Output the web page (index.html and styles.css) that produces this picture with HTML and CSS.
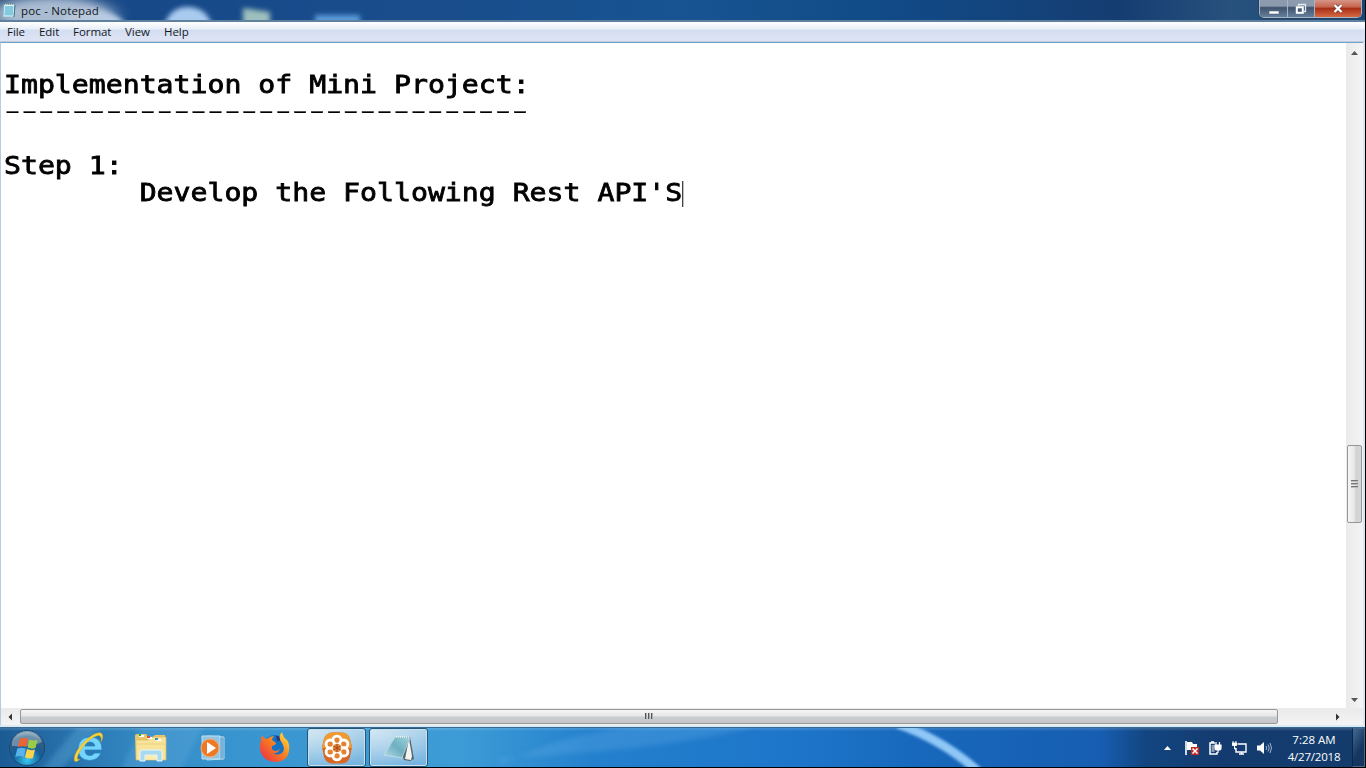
FILE: index.html
```html
<!DOCTYPE html>
<html lang="en">
<head>
<meta charset="utf-8">
<title>poc - Notepad</title>
<link rel="stylesheet" href="styles.css">
</head>
<body>
<div class="screen">
<main class="window">
  <header class="titlebar">
    <svg class="backdrop" width="1366" height="22" viewBox="0 0 1366 22">
      <defs><filter id="soft" x="-30%" y="-60%" width="160%" height="220%"><feGaussianBlur stdDeviation="2.600"/></filter>
      <filter id="haze" x="-20%" y="-80%" width="140%" height="260%"><feGaussianBlur stdDeviation="10 4"/></filter></defs>
      <path d="M60 24Q68 9 90 9Q116 11 126 24Z" fill="#b9d1ee" filter="url(#soft)"/>
      <ellipse cx="52" cy="14" rx="60" ry="17" fill="#b9c8db" opacity=".9" filter="url(#haze)"/>
      <path d="M164 26Q170 7 187 7Q207 7 212 26Z" fill="#a8caef" filter="url(#soft)"/>
      <path d="M243 8L270 12V26H243Z" fill="#9dbfbd" filter="url(#soft)"/>
      <path d="M315 15H360V26H315Z" fill="#5b9bda" filter="url(#soft)"/>
    </svg>
    <svg class="app-icon" width="14" height="16" viewBox="0 0 14 16"><path d="M2 2h11l-1 13H1z" fill="#e1f3f7" stroke="#86afbd" stroke-width=".8"/><path d="M3 4h8.500l-.7 9.500H2.300z" fill="#81cadf"/><path d="M2 2h11" stroke="#526f7b" stroke-dasharray="1 1"/><path d="M13 3l-1 12" stroke="#417585"/></svg>
    <span class="title">poc - Notepad</span>
    <div class="controls">
      <span class="ctl min"><svg width="14" height="12" viewBox="0 0 14 12"><path d="M2 8h10v3H2z" fill="#fff" stroke="#51647c" stroke-width=".6"/></svg></span>
      <span class="ctl max"><svg width="14" height="14" viewBox="0 0 14 14"><path d="M4.500 4V2.500h7v7H10" fill="none" stroke="#dfe7f1" stroke-width="1.300"/><rect x="2.800" y="5.300" width="6" height="5.500" fill="#425b7b" stroke="#fff" stroke-width="2"/></svg></span>
      <span class="ctl close"><svg width="14" height="12" viewBox="0 0 14 12"><path d="M3.500 2l7 7M10.500 2l-7 7" stroke="#743e37" stroke-width="3.600"/><path d="M3.500 2l7 7M10.500 2l-7 7" stroke="#fff" stroke-width="2.300"/></svg></span>
    </div>
  </header>
  <nav class="menu"><span class="m-file">File</span><span class="m-edit">Edit</span><span class="m-format">Format</span><span class="m-view">View</span><span class="m-help">Help</span></nav>
  <div class="client">
    <section class="editor">
      <div class="line">Implementation of Mini Project:</div>
      <div class="line dashes">-------------------------------</div>
      <div class="line"> </div>
      <div class="line">Step 1:</div>
      <div class="line">        Develop the Following Rest API'S<i class="caret"></i></div>
    </section>
    <aside class="vscroll">
      <svg width="9" height="6" viewBox="0 0 9 6"><path d="M1 5h7L4.500 1z" fill="#555"/></svg>
      <div class="vthumb"><i></i><i></i><i></i></div>
      <svg width="9" height="6" viewBox="0 0 9 6"><path d="M1 1h7L4.500 5z" fill="#555"/></svg>
    </aside>
  </div>
  <div class="hscroll">
    <svg class="left-arrow" width="6" height="8" viewBox="0 0 6 8"><path d="M5 .5v7L1.500 4z" fill="#333"/></svg>
    <div class="hthumb"><i></i><i></i><i></i></div>
    <svg class="right-arrow" width="6" height="8" viewBox="0 0 6 8"><path d="M1 .5v7L4.500 4z" fill="#333"/></svg>
  </div>
</main>
<footer class="taskbar">
  <svg class="backdrop" width="1366" height="39" viewBox="0 0 1366 39">
    <g filter="url(#soft)"><path d="M40 44L80-4H104L58 44Z" fill="#6ab5e2" opacity=".3"/><path d="M120 44L142-4H205L180 44Z" fill="#7abce8" opacity=".22"/><path d="M500 38Q560 4 650-3L760-3Q670 22 500 30Z" fill="#71b3ec" opacity=".25"/></g>
    <path d="M799-4Q844 12 880 44" transform="translate(99)" fill="none" stroke="#8fc7f6" stroke-width="9" filter="url(#edge)"/>
    <defs><filter id="edge"><feGaussianBlur stdDeviation="1.500"/></filter></defs>
  </svg>
  <div class="start">
    <svg width="38" height="38" viewBox="0 0 38 38">
      <defs><radialGradient id="orb" cx=".5" cy=".85" r=".9"><stop offset="0" stop-color="#36c7ef"/><stop offset=".45" stop-color="#155d98"/><stop offset=".75" stop-color="#375d7d"/><stop offset="1" stop-color="#b7cedb"/></radialGradient></defs>
      <circle cx="19" cy="19" r="17.500" fill="url(#orb)" stroke="#164a76"/>
      <path d="M4 13Q8 3 19 3T34 13Q25 18 4 17Z" fill="#d6e9f3" opacity=".36"/>
      <path d="M12 10q4.500-2 8 0L18.200 18q-4-1.500-8.500 0z" fill="#ed6432"/><path d="M21 10.500q4 2 8.500.3L27.500 19q-4 1.500-8-.5z" fill="#9ccb46"/><path d="M9.300 19.500q4.200-1.500 8.300 0L15.800 28q-4-2-8.500 0z" fill="#59b2eb"/><path d="M19 20q4 2 8 .5L25 29q-4 1.500-8-.7z" fill="#fad34c"/>
    </svg>
  </div>
  <div class="task">
    <svg width="34" height="34" viewBox="0 0 34 34"><path d="M29 22Q26 29.500 17 29.500Q6 28.500 6 17.500Q7 6 18 6Q30 6 30 19H13Q13 24.500 18 24.500Q21 24.500 22.500 22ZM13 15H23Q22 11 18 11Q14 11 13 15Z" fill="#75d4fa" stroke="#2585c9" stroke-width=".8" fill-rule="evenodd"/><path d="M8 28C1 35 0 26 7 17C15 6 27-1 30 3Q32 6 29 11Q30 5 27 4.500C22 4 12 13 8 20C4 27 5 30 8 28Z" fill="#f6d33f" stroke="#d8a71c" stroke-width=".5"/></svg>
  </div>
  <div class="task">
    <svg width="34" height="34" viewBox="0 0 34 34"><path d="M1 5Q1 3 3 3H12L14 6H19L21 4H31V29H2Z" fill="#e7c766"/><path d="M2 9H14L16 6H32V29H2Z" fill="#f8e39a" stroke="#d9b861" stroke-width=".7"/><path d="M5 5h5M13 7h5M22 9h5" stroke="#fff" stroke-width="2"/><path d="M5 4h2" stroke="#25a260" stroke-width="2"/><path d="M13 6h3" stroke="#dc5137" stroke-width="2"/><path d="M21 8h3" stroke="#3e8ac5" stroke-width="2"/><path d="M2 13H31" stroke="#ecd17d"/><path d="M6 30V21Q6 19 9 19H25Q28 19 28 21V30H23V24H11V30Z" fill="#a9d9ef" stroke="#e4f8ff"/><path d="M12 26H22M12 28H22" stroke="#fff6c8"/></svg>
  </div>
  <div class="task">
    <svg width="34" height="34" viewBox="0 0 34 34"><path d="M11 5L28 6V28L11 29Z" fill="#438fc4" stroke="#b3d9ee"/><path d="M6 5H24V28H6Z" fill="#8dc5e5" stroke="#c2e0ef"/><path d="M26 6V28" stroke="#a8d3ed"/><circle cx="14" cy="17" r="9" fill="#ef7826" stroke="#f4ad71"/><path d="M11 11L20 17L11 23Z" fill="#fff"/></svg>
  </div>
  <div class="task">
    <svg width="34" height="34" viewBox="0 0 34 34"><defs><linearGradient id="fox" x1="0" y1="1" x2="1" y2="0"><stop offset="0" stop-color="#ed2449"/><stop offset=".55" stop-color="#f68221"/><stop offset="1" stop-color="#ffee45"/></linearGradient></defs><circle cx="17" cy="15" r="11" fill="#1472c7"/><path d="M18 5Q25 4 26 13Q24 9 19 10Z" fill="#203b85"/><path d="M4 4Q6 8 9 8Q12 5 16 5Q14 7 14 9L18 12Q18 14 14 15Q13 19 17 20Q20 20 22 18Q20 23 15 22Q20 26 25 21Q27 17 24 12Q19 6 24 1Q25 6 29 9Q32 13 31 20Q29 31 17 31Q4 30 2 18Q1 14 3 10Q3 6 4 4Z" fill="url(#fox)"/></svg>
  </div>
  <div class="task active">
    <svg width="34" height="34" viewBox="0 0 34 34"><path d="M12 1.500H22Q28 2 30 8L32 16L30 26Q28 32 22 32.500H12Q6 32 4 26L2 16L4 8Q6 2 12 1.500Z" fill="#d76722"/><path d="M12 1.500H22Q28 2 30 8L32 17H2L4 8Q6 2 12 1.500Z" fill="#ef9b32"/><g fill="#e2832f" stroke="#fff" stroke-width="2.900"><circle cx="17" cy="9.200" r="4.100"/><circle cx="23.800" cy="13.100" r="4.100"/><circle cx="23.800" cy="20.900" r="4.100"/><circle cx="17" cy="24.800" r="4.100"/><circle cx="10.200" cy="20.900" r="4.100"/><circle cx="10.200" cy="13.100" r="4.100"/></g><circle cx="17" cy="17" r="4.300" fill="#e8883a"/><path d="M17 13v8M13.500 15l7 4M20.500 15l-7 4" stroke="#a6491b" stroke-width="1"/></svg>
  </div>
  <div class="task active notepad">
    <svg width="34" height="34" viewBox="0 0 34 34"><defs><linearGradient id="pad" x1="0" y1="1" x2="1" y2="0"><stop stop-color="#b7dce6"/><stop offset=".5" stop-color="#6eafc0"/><stop offset="1" stop-color="#9ed3db"/></linearGradient></defs><path d="M14 6L28 6L32 28L28 30L22 29Z" fill="#54676c"/><path d="M27 8L23 28L29 29L30 25Z" fill="#f1f4f2"/><path d="M13 6L28 7L20 27L2 24Z" fill="url(#pad)" stroke="#cce7ee" stroke-width=".6"/><path d="M14 5.500L28 6.500" stroke="#e8f2f3" stroke-width="1.500" stroke-dasharray="1 1"/></svg>
  </div>
  <div class="tray">
    <svg width="9" height="6" viewBox="0 0 9 6"><path d="M1 5h7L4.500 1z" fill="#fff"/></svg>
    <svg class="t-flag" width="16" height="16" viewBox="0 0 16 16"><path d="M2 1V15" stroke="#fff" stroke-width="1.600"/><path d="M3 2H8L9 4H13V10H3Z" fill="#fff"/><path d="M7 7h8v8H7z" fill="#c62922"/><path d="M8.500 8.500l5 5M13.500 8.500l-5 5" stroke="#fff" stroke-width="1.500"/></svg>
    <svg class="t-power" width="16" height="16" viewBox="0 0 16 16"><path d="M8 3H3v11h7v-2M4 2h3" fill="none" stroke="#fff" stroke-width="1.500"/><path d="M4.500 5h3v7h-3" fill="#879bb4"/><path d="M8 5h6v3q0 2-2 2h-2q-2 0-2-2zM9 2v4M12.500 2v4M11 10v3" fill="#fff" stroke="#fff" stroke-width="1.200"/></svg>
    <svg class="t-net" width="17" height="16" viewBox="0 0 17 16"><path d="M6.500 4H15V12H5V8M8 14H13M10.500 12v2" fill="none" stroke="#fff" stroke-width="1.400"/><path d="M1.500 3H5.500V5.500H1.500ZM2 1v3M5 1v3M3.500 6v3H5" fill="#fff" stroke="#fff"/></svg>
    <svg class="t-sound" width="17" height="16" viewBox="0 0 17 16"><path d="M1 5.500H4L8 2V14L4 10.500H1Z" fill="#fff"/><path d="M10 6Q11.500 8 10 10M12 4.500Q14.500 8 12 11.500M14 3Q17 8 14 13" fill="none" stroke="#b3c5dc" stroke-width=".9"/></svg>
    <div class="clock"><span class="time">7:28 AM</span><span class="date">4/27/2018</span></div>
    <div class="show-desktop"></div>
  </div>
</footer>
</div>
</body>
</html>
```
FILE: styles.css
```css
* { box-sizing: border-box; }
body { margin: 0; overflow: hidden; background: #000; }
svg { display: block; flex: none; }
.screen { width: 1366px; height: 768px; display: flex; flex-direction: column; }
.window { width: 1365px; height: 728px; display: flex; flex-direction: column; background: #dce7f3; border-bottom: 1px solid #36688f; }
.titlebar { height: 22px; flex: none; display: flex; align-items: center; position: relative; overflow: hidden; background: linear-gradient(90deg, #315580 0, #174989 130px, #194d8c 460px, #175491 680px, #114a86 900px, #153d72 1120px, #28517d 1230px, #174779 100%); border-bottom: 2px solid #60809f; }
.backdrop { position: absolute; left: 0; top: 0; pointer-events: none; }
.app-icon { margin-left: 2px; z-index: 1; }
.title { font: 11.5px/20px "Open Sans", sans-serif; color: #101820; margin-left: 5px; padding-top: 1px; letter-spacing: .18px; z-index: 1; }
.controls { display: flex; align-self: flex-start; margin-left: auto; margin-right: 3px; width: 103px; height: 18px; border: 1px solid #a4b5c5; border-top: 0; border-radius: 0 0 5px 5px; overflow: hidden; box-shadow: 0 0 0 1px #2a405d; z-index: 1; }
.ctl { width: 28px; display: flex; align-items: center; justify-content: center; background: linear-gradient(#8b9aac 0 35%, #40536d 45%, #64809d); border-right: 1px solid #a5b5c5; }
.max { width: 27px; }
.close { flex: 1; border: 0; background: linear-gradient(#d79586 0, #c66650 40%, #a92f17 50%, #d66a43); }
.menu { height: 20px; flex: none; display: flex; align-items: center; background: linear-gradient(#fff 0, #e9eff8 7px, #d4def1 8px, #dde3f4 18px); border-bottom: 1px solid #c0ccdc; padding-left: 7px; font: 11.5px/18px "Open Sans", sans-serif; color: #15191d; }
.menu span { white-space: nowrap; letter-spacing: -.05px; }
.m-file { width: 32px; }
.m-edit { width: 34px; }
.m-format { width: 52px; }
.m-view { width: 39px; }
.client { flex: 1; min-height: 0; display: flex; border-top: 1px solid #74a2c7; border-left: 1px solid #b5cce1; margin-right: 2px; background: #fff; }
.editor { flex: 1; padding: 28px 0 0 3px; overflow: hidden; background: #fff; }
.line { height: 27px; white-space: pre; font: 25px/27px "DejaVu Sans Mono", monospace; color: #000; -webkit-text-stroke: .8px #000; transform: scaleX(1.1265); transform-origin: 0 0; width: 1100px; }
.line.dashes { width: 240px; margin-left: -5px; font-size: 20px; line-height: 26px; letter-spacing: -4.5px; transform: scaleX(2.243); -webkit-text-stroke: .2px #000; }
.caret { display: inline-block; width: 1px; height: 26px; background: #222; vertical-align: -6px; }
.vscroll { width: 17px; display: flex; flex-direction: column; align-items: center; background: linear-gradient(90deg, #eaeaea, #f4f4f4); padding: 7px 0 5px; }
.vthumb { width: 15px; height: 78px; margin: 389px 0 auto; border: 1px solid #979797; border-radius: 2px; background: linear-gradient(90deg, #f5f5f5, #e6e6e7 50%, #d0d1d3 60%, #d8d8da); display: flex; flex-direction: column; align-items: center; justify-content: center; gap: 1px; }
.vthumb i { width: 7px; height: 2px; background: #777; border-bottom: 1px solid #bbb; }
.hscroll { height: 17px; flex: none; margin-right: 2px; border-left: 1px solid #b5cce1; display: flex; align-items: center; background: linear-gradient(#eaeaea, #f4f4f4); }
.window::after { content: ""; height: 2px; flex: none; background: #dceaf5; }
.left-arrow { margin-left: 6px; }
.hthumb { width: 1258px; height: 15px; margin-left: 7px; border: 1px solid #979797; border-radius: 2px; background: linear-gradient(#f5f5f5, #e6e6e7 45%, #c9cdd1 55%, #c5c5c7); display: flex; justify-content: center; align-items: center; gap: 1px; }
.hthumb i { width: 2px; height: 6px; margin-top: -2px; background: #555; border-right: 1px solid #aaa; }
.right-arrow { margin-left: auto; margin-right: 22px; }
.taskbar { width: 1365px; height: 39px; position: relative; overflow: hidden; display: flex; align-items: center; background: linear-gradient(#ffffff22 0 1px, transparent 3px), linear-gradient(90deg, #1b5b94 0, #276faa 60px, #338bc5 145px, #3995cf 240px, #3d9cd6 460px, #2481ce 590px, #1d75c9 800px, #1767bb 930px, #175eb2 1100px, #124681 1145px, #143b6f 1220px, #133c6c 100%); }
.start { width: 65px; padding-left: 8px; z-index: 1; }
.task { width: 60px; height: 39px; margin-right: 2px; display: flex; align-items: center; justify-content: center; z-index: 1; }
.start + .task { margin-left: -6px; }
.active { width: 59px; margin-right: 3px; border: 1px solid #265779; border-radius: 3px; box-shadow: inset 0 0 0 1px #c4e0f1; background: radial-gradient(at 0 0, #e3f0f7bb, transparent 85%), linear-gradient(#a8cfe9, #72b3df); }
.notepad { margin-right: 0; }
.tray { display: flex; align-items: center; margin-left: auto; height: 100%; z-index: 1; }
.t-flag { margin-left: 12px; }
.t-power { margin-left: 7px; }
.t-net { margin-left: 8px; }
.t-sound { margin-left: 8px; }
.clock { width: 64px; margin-left: 9px; display: flex; flex-direction: column; align-items: center; color: #fff; font: 11.5px/17px "Open Sans", sans-serif; letter-spacing: -.2px; white-space: nowrap; }
.time { letter-spacing: 0; }
.show-desktop { width: 13px; height: 39px; margin-left: 6px; border: 1px solid #46678a; border-left-color: #0b2648; background: linear-gradient(120deg, #436990, #15365f 60%); }
```
